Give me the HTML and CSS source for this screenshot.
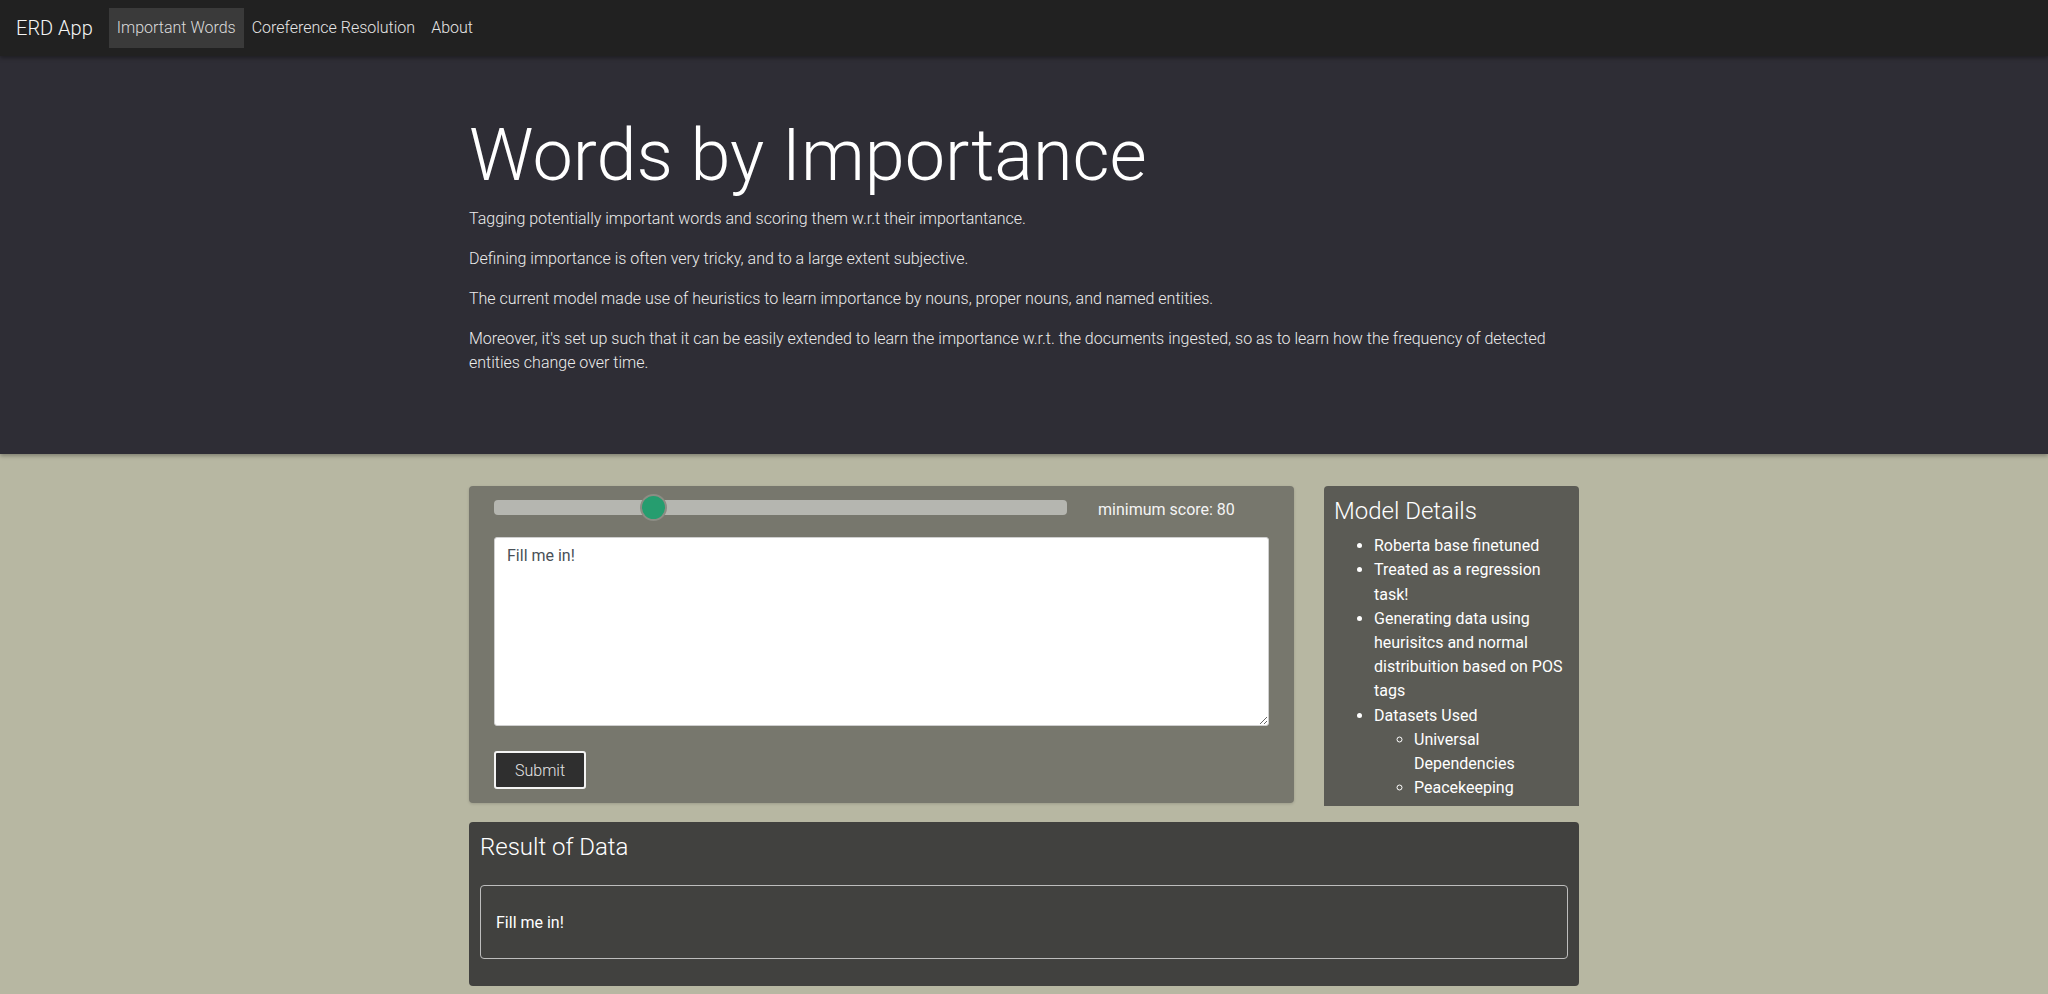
FILE: index.html
```html
<!DOCTYPE html>
<html lang="en">
<head>
<meta charset="utf-8">
<title>ERD App</title>
<link rel="stylesheet" href="styles.css">
</head>
<body>
<nav class="navbar">
  <a class="brand" href="#">ERD App</a>
  <ul class="nav">
    <li><a class="nav-link active" href="#">Important Words</a></li>
    <li><a class="nav-link" href="#">Coreference Resolution</a></li>
    <li><a class="nav-link" href="#">About</a></li>
  </ul>
</nav>
<header class="hero">
  <div class="container">
    <h1 class="hero-title">Words by Importance</h1>
    <p>Tagging potentially important words and scoring them w.r.t their importantance.</p>
    <p>Defining importance is often very tricky, and to a large extent subjective.</p>
    <p>The current model made use of heuristics to learn importance by nouns, proper nouns, and named entities.</p>
    <p>Moreover, it's set up such that it can be easily extended to learn the importance w.r.t. the documents ingested, so as to learn how the frequency of detected entities change over time.</p>
  </div>
</header>
<main class="container">
  <div class="row">
    <div class="col-main">
      <form class="card card-input">
        <div class="slider-row">
          <input class="slider" type="range" min="0" max="300" value="80">
          <span class="slider-label">minimum score: 80</span>
        </div>
        <textarea class="text-input">Fill me in!</textarea>
        <button class="btn-submit" type="button">Submit</button>
      </form>
    </div>
    <div class="col-side">
      <aside class="card card-details">
        <h4 class="card-title">Model Details</h4>
        <ul class="details-list">
          <li>Roberta base finetuned</li>
          <li>Treated as a regression task!</li>
          <li>Generating data using heurisitcs and normal distribuition based on POS tags</li>
          <li>Datasets Used
            <ul>
              <li>Universal Dependencies</li>
              <li>Peacekeeping</li>
            </ul>
          </li>
        </ul>
      </aside>
    </div>
  </div>
  <section class="card card-result">
    <h4 class="card-title result-title">Result of Data</h4>
    <div class="result-box">Fill me in!</div>
  </section>
</main>
</body>
</html>
```
FILE: styles.css
```css
* { box-sizing: border-box; }

body {
  margin: 0;
  background: #b7b7a2;
  font-family: Roboto, "Noto Sans", sans-serif;
  font-weight: 300;
  font-size: 16px;
  line-height: 1.5;
  color: #fff;
}

.container {
  width: 1110px;
  margin: 0 auto;
}

/* Navbar */
.navbar {
  position: relative;
  z-index: 2;
  display: flex;
  align-items: center;
  height: 56px;
  padding: 8px 16px;
  background: #212121;
  box-shadow: 0 2px 4px rgba(0, 0, 0, 0.35);
}
.brand {
  font-size: 20px;
  line-height: 30px;
  margin-right: 16px;
  color: #f4f4f4;
  text-decoration: none;
}
.nav {
  display: flex;
  list-style: none;
  margin: 0;
  padding: 0;
}
.nav-link {
  display: block;
  padding: 8px;
  color: #e6e6e6;
  text-decoration: none;
}
.nav-link.active {
  background: #3a3a3a;
  color: #dcdcdc;
}

/* Hero */
.hero {
  position: relative;
  z-index: 1;
  background: #2e2d35;
  padding: 57px 0 63px;
  margin-bottom: 32px;
  box-shadow: 0 2px 4px rgba(0, 0, 0, 0.3);
  color: #ececec;
}
.hero-title {
  font-size: 72px;
  font-weight: 300;
  line-height: 1.2;
  margin: 0 0 8px;
  color: #fff;
}
.hero p {
  margin: 0 0 16px;
}

/* Layout */
.row {
  display: flex;
  gap: 30px;
  align-items: flex-start;
}
.col-main { width: 825px; }
.col-side { width: 255px; }

.card {
  border-radius: 4px;
}
.card-title {
  font-size: 24px;
  font-weight: 300;
  line-height: 1.2;
  margin: 0 0 8px;
}

/* Input card */
.card-input {
  background: #77776d;
  padding: 7px 25px 14px;
  box-shadow: 0 1px 3px rgba(0, 0, 0, 0.15);
}
.slider-row {
  display: flex;
  align-items: center;
  height: 28px;
}
.slider {
  -webkit-appearance: none;
  appearance: none;
  width: 573px;
  height: 15px;
  margin: 0;
  background: #b5b6b0;
  border-radius: 4px;
  outline: none;
}
.slider::-webkit-slider-thumb {
  -webkit-appearance: none;
  appearance: none;
  box-sizing: border-box;
  width: 27px;
  height: 27px;
  border-radius: 50%;
  background: #269d6f;
  border: 2px solid #8d8d84;
}
.slider-label {
  margin-left: 31px;
  padding-top: 5px;
  font-weight: 400;
  color: #f4f4f4;
}
.text-input {
  display: block;
  width: 100%;
  height: 189px;
  margin-top: 16px;
  padding: 6px 12px;
  border: 1px solid #cfcfcf;
  border-radius: 3px;
  background: #fff;
  font-family: Roboto, "Noto Sans", sans-serif;
  font-size: 16px;
  font-weight: 400;
  line-height: 1.5;
  color: #495057;
}
.btn-submit {
  display: block;
  margin-top: 25px;
  height: 38px;
  padding: 0 19px;
  background: #2f2f2f;
  border: 2px solid #f4f4f4;
  border-radius: 3px;
  font-family: Roboto, "Noto Sans", sans-serif;
  font-size: 16px;
  font-weight: 300;
  color: #e4e4e4;
}

/* Details card */
.card-details {
  background: #5b5b55;
  height: 320px;
  overflow: hidden;
  padding: 11px 10px 10px;
  border-radius: 4px 4px 0 0;
}
.details-list {
  margin: 0;
  padding-left: 40px;
  font-weight: 400;
  line-height: 24.2px;
}
.details-list ul {
  margin: 0;
  padding-left: 40px;
  list-style: circle;
}

/* Result card */
.card-result {
  margin-top: 16px;
  background: #41413f;
  padding: 11px 11px 27px;
}
.result-title {
  margin-bottom: 23px;
}
.result-box {
  border: 1px solid #bdbdbd;
  border-radius: 4px;
  padding: 25px 15px 23px;
  font-weight: 400;
}
```
